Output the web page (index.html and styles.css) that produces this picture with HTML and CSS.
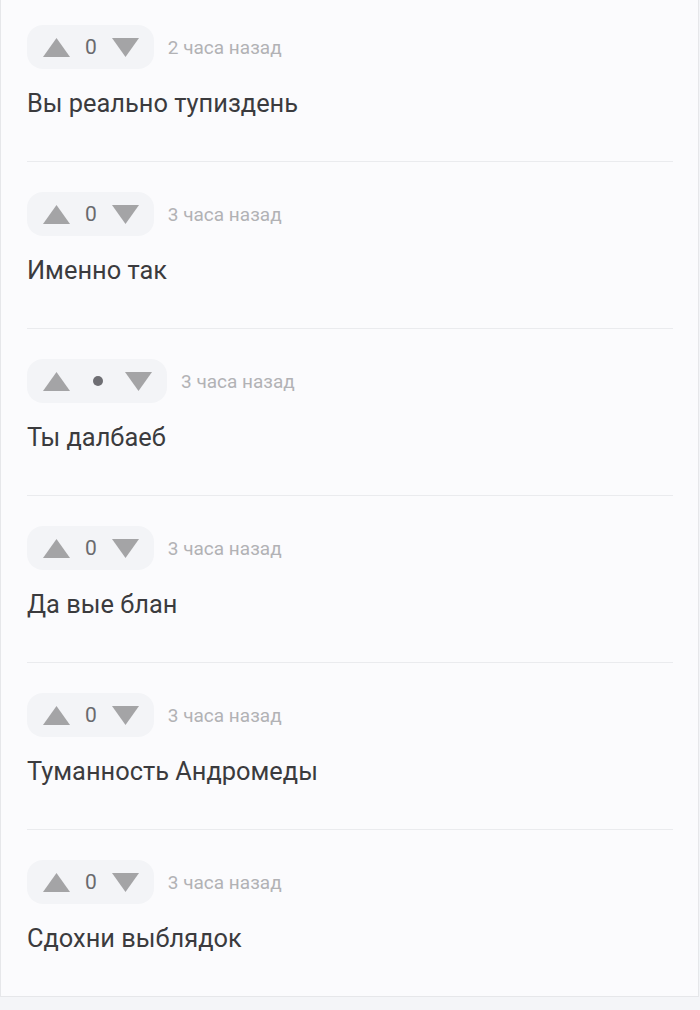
FILE: index.html
```html
<!DOCTYPE html>
<html lang="ru">
<head>
  <meta charset="UTF-8" />
  <meta name="viewport" content="width=device-width, initial-scale=1.0" />
  <title>Комментарии</title>
  <link rel="stylesheet" href="styles.css">
</head>
<body>
  <div class="comments">

    <div class="comment">
      <div class="meta">
        <div class="votes">
          <svg class="arrow" viewBox="0 0 27 19"><polygon points="13.5,0 27,19 0,19" /></svg>
          <span class="count">0</span>
          <svg class="arrow" viewBox="0 0 27 19"><polygon points="0,0 27,0 13.5,19" /></svg>
        </div>
        <span class="time">2 часа назад</span>
      </div>
      <div class="text">Вы реально тупиздень</div>
    </div>

    <div class="comment">
      <div class="meta">
        <div class="votes">
          <svg class="arrow" viewBox="0 0 27 19"><polygon points="13.5,0 27,19 0,19" /></svg>
          <span class="count">0</span>
          <svg class="arrow" viewBox="0 0 27 19"><polygon points="0,0 27,0 13.5,19" /></svg>
        </div>
        <span class="time">3 часа назад</span>
      </div>
      <div class="text">Именно так</div>
    </div>

    <div class="comment">
      <div class="meta">
        <div class="votes">
          <svg class="arrow" viewBox="0 0 27 19"><polygon points="13.5,0 27,19 0,19" /></svg>
          <span class="count loading"><span class="dot"></span></span>
          <svg class="arrow" viewBox="0 0 27 19"><polygon points="0,0 27,0 13.5,19" /></svg>
        </div>
        <span class="time">3 часа назад</span>
      </div>
      <div class="text">Ты далбаеб</div>
    </div>

    <div class="comment">
      <div class="meta">
        <div class="votes">
          <svg class="arrow" viewBox="0 0 27 19"><polygon points="13.5,0 27,19 0,19" /></svg>
          <span class="count">0</span>
          <svg class="arrow" viewBox="0 0 27 19"><polygon points="0,0 27,0 13.5,19" /></svg>
        </div>
        <span class="time">3 часа назад</span>
      </div>
      <div class="text">Да вые блан</div>
    </div>

    <div class="comment">
      <div class="meta">
        <div class="votes">
          <svg class="arrow" viewBox="0 0 27 19"><polygon points="13.5,0 27,19 0,19" /></svg>
          <span class="count">0</span>
          <svg class="arrow" viewBox="0 0 27 19"><polygon points="0,0 27,0 13.5,19" /></svg>
        </div>
        <span class="time">3 часа назад</span>
      </div>
      <div class="text">Туманность Андромеды</div>
    </div>

    <div class="comment">
      <div class="meta">
        <div class="votes">
          <svg class="arrow" viewBox="0 0 27 19"><polygon points="13.5,0 27,19 0,19" /></svg>
          <span class="count">0</span>
          <svg class="arrow" viewBox="0 0 27 19"><polygon points="0,0 27,0 13.5,19" /></svg>
        </div>
        <span class="time">3 часа назад</span>
      </div>
      <div class="text">Сдохни выблядок</div>
    </div>

  </div>
</body>
</html>
```

FILE: styles.css
```css
body {
  margin: 0;
  background: #f4f5f8;
  font-family: Roboto, "Noto Sans", sans-serif;
  height: 1010px;
}
.comments {
  background: #fbfbfd;
  border: 1px solid #e6e7ea;
  border-top: none;
  width: 699px;
  padding: 0 25px 0 26px;
  box-sizing: border-box;
}
.comment {
  padding: 30px 0 43px;
  border-bottom: 1px solid #eaebee;
}
.comment:first-child {
  padding-top: 25px;
}
.comment:last-child {
  border-bottom: none;
}
.meta {
  display: flex;
  align-items: center;
  gap: 14px;
}
.votes {
  display: flex;
  align-items: center;
  gap: 15px;
  height: 44px;
  padding: 0 15px 0 16px;
  background: #f3f4f7;
  border-radius: 16px;
}
.arrow {
  width: 27px;
  height: 19px;
  fill: #a4a4a6;
}
.count {
  font-size: 21px;
  color: #6a6a6e;
  line-height: 1;
}
.loading {
  width: 25px;
  display: flex;
  justify-content: center;
  align-items: center;
}
.dot {
  width: 10px;
  height: 10px;
  border-radius: 50%;
  background: #6e6e73;
}
.time {
  font-size: 19px;
  color: #b2b2b5;
}
.text {
  margin-top: 19px;
  font-size: 25.4px;
  line-height: 30px;
  color: #3b3b3e;
}
```
